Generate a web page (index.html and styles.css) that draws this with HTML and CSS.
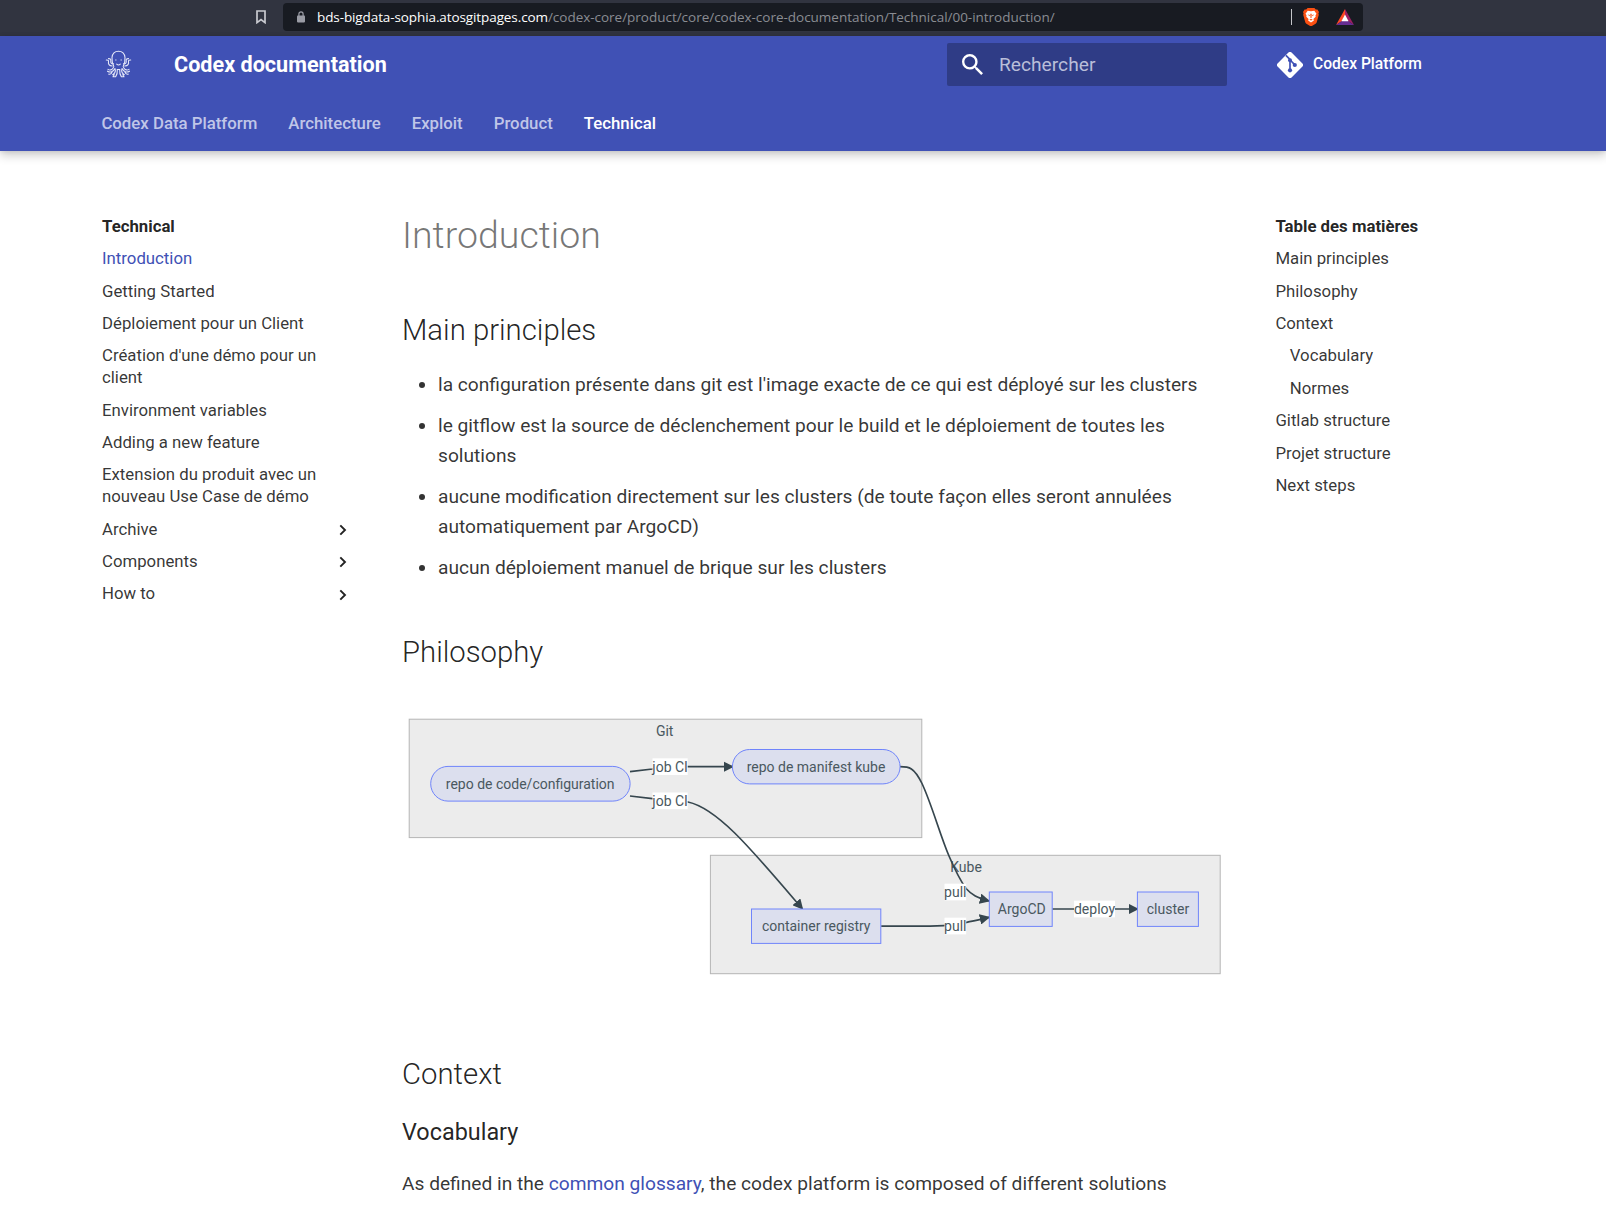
FILE: index.html
```html
<!DOCTYPE html>
<html lang="fr">
<head>
<meta charset="utf-8">
<title>Introduction - Codex documentation</title>
<link rel="stylesheet" href="styles.css">
</head>
<body>
<div class="browser">
  <svg class="bookmark" viewBox="0 0 10 14"><path d="M1 1h8v11.6L5 9.6l-4 3z" fill="none" stroke="#c9cad0" stroke-width="1.7"/></svg>
  <div class="urlbar">
    <svg class="lock" viewBox="0 0 8 12"><path d="M1.9 5V3a2.1 2.1 0 0 1 4.2 0v2" fill="none" stroke="#9a9ca5" stroke-width="1.2"/><rect x="0" y="4.6" width="8" height="6.8" rx=".8" fill="#9a9ca5"/></svg>
    <span class="url"><span class="host">bds-bigdata-sophia.atosgitpages.com</span><span class="path">/codex-core/product/core/codex-core-documentation/Technical/00-introduction/</span></span>
    <span class="divider"></span>
    <svg class="brave" viewBox="0 0 16 18"><path d="M4.6 0h6.8l1.4 1.5 1.6-.1L16 4l-.6 1.6.4 1.2-2 7.2c-.2.8-.6 1.3-1.2 1.8L8.7 18.1H7.3l-3.9-2.3c-.6-.5-1-1-1.2-1.8L.2 6.800.6 5.600 0 4l1.600-2.600 1.600.1z" fill="#fb5012"/><path d="M8 3.300l3.300-.5 2.200 3-1 1.500.2 1.400-2.300 2.300.5 1.400L8 14.600l-2.900-2.200.5-1.400-2.300-2.300.2-1.400-1-1.500 2.200-3z" fill="#fff"/><path d="M4.600 6.400l2.300.6-.3 1.300zM11.400 6.400l-2.300.6.3 1.300zM7.300 5.800h1.400L8.500 10h-1zM6.300 11.700L8 10.800l1.700.9L8 12.600z" fill="#fb5012"/></svg>
    <svg class="bat" viewBox="0 0 18 16"><path d="M9 0L0 16l6-4 3-5.500z" fill="#ff4724"/><path d="M9 0l9 16-6-4-3-5.500z" fill="#9e1f63"/><path d="M0 16h18l-6-4H6z" fill="#662d91"/><path d="M9 5.600L5.400 12.200h7.200z" fill="#fff"/></svg>
  </div>
</div>

<header class="header">
  <div class="header-row">
    <svg class="logo" viewBox="0 0 26 28" fill="none" stroke="#e4e7f8" stroke-width="1.1" stroke-linecap="round" stroke-linejoin="round">
      <path d="M8.300 16.500C7 13.500 6.200 10.500 6.500 7.500 6.900 3.700 9.500 1.200 13 1.200s6.100 2.500 6.500 6.300c.3 3-.5 6-1.800 9"/>
      <path d="M6.700 16C3.500 15.800 2.600 13.800 3 11.800 3.200 10.600 2.800 9.900.8 10M8 13.800c-2.200 0-3-1-2.700-2.600C5.600 9.500 4.800 8.500 3 8.600"/>
      <path d="M19.300 16c3.200-.2 4.100-2.200 3.700-4.200-.2-1.200.2-1.900 2.200-1.800M18 13.800c2.200 0 3-1 2.700-2.600-.3-1.700.5-2.700 2.300-2.600"/>
      <path d="M8 17.500c-1.600 2.500-3.500 3.200-5.500 1.900M9.500 18.500c-1.700 3-4.400 4.500-7.500 2.700M9.800 19.500c.3 2.500-.6 4-2.600 5.200M6.500 22.200c-.5 1.600-1.500 2.300-3.200 1.900M11.800 19.500c.2 3-.2 5.400-1.600 7.200H7.500l1.200-2"/>
      <path d="M18 17.500c1.600 2.500 3.500 3.200 5.500 1.900M16.500 18.500c1.700 3 4.400 4.500 7.500 2.700M16.200 19.500c-.3 2.500.6 4 2.600 5.200M19.500 22.200c.5 1.600 1.500 2.300 3.200 1.900M14.200 19.500c-.2 3 .2 5.400 1.600 7.200h2.700l-1.200-2"/>
      <path d="M11.200 14.200c1 .9 2.600.9 3.600 0M10.400 9.800v.3M15.600 9.800v.3M11.800 19.500h2.400"/>
    </svg>
    <span class="site-title">Codex documentation</span>
    <div class="search">
      <svg viewBox="3 3 17.500 17.500"><path fill="#fff" d="M9.500 3A6.500 6.500 0 0 1 16 9.500c0 1.610-.59 3.090-1.560 4.230l.27.270h.79l5 5-1.500 1.500-5-5v-.79l-.27-.27A6.516 6.516 0 0 1 9.500 16 6.500 6.500 0 0 1 3 9.500 6.500 6.500 0 0 1 9.500 3m0 2C7 5 5 7 5 9.500S7 14 9.500 14 14 12 14 9.500 12 5 9.500 5z"/></svg>
      <span>Rechercher</span>
    </div>
    <div class="source">
      <svg viewBox="0 0 26 26"><path d="M11.200.8a2.500 2.500 0 0 1 3.600 0l10.400 10.400a2.500 2.500 0 0 1 0 3.600L14.800 25.200a2.500 2.500 0 0 1-3.600 0L.8 14.800a2.500 2.500 0 0 1 0-3.600z" fill="#fff"/><path d="M8.900 3.300l4 4M13 8v10.200M13.600 8.500l4 4.200" stroke="#4051b5" stroke-width="1.700" fill="none"/><circle cx="13" cy="8.200" r="2" fill="#4051b5"/><circle cx="13" cy="18.300" r="2.100" fill="#4051b5"/><circle cx="17.800" cy="13" r="2.100" fill="#4051b5"/></svg>
      <span>Codex Platform</span>
    </div>
  </div>
  <nav class="tabs">
    <span>Codex Data Platform</span><span>Architecture</span><span>Exploit</span><span>Product</span><span class="active">Technical</span>
  </nav>
</header>

<main class="main">
  <nav class="nav">
    <div class="nav-title">Technical</div>
    <div class="item current">Introduction</div>
    <div class="item">Getting Started</div>
    <div class="item">Déploiement pour un Client</div>
    <div class="item">Création d'une démo pour un client</div>
    <div class="item">Environment variables</div>
    <div class="item">Adding a new feature</div>
    <div class="item">Extension du produit avec un nouveau Use Case de démo</div>
    <div class="item section">Archive<svg viewBox="0 0 8 12"><path d="M1.300 1.300L6 6l-4.700 4.700"/></svg></div>
    <div class="item section">Components<svg viewBox="0 0 8 12"><path d="M1.300 1.300L6 6l-4.700 4.700"/></svg></div>
    <div class="item section">How to<svg viewBox="0 0 8 12"><path d="M1.300 1.300L6 6l-4.700 4.700"/></svg></div>
  </nav>

  <article class="content">
    <h1>Introduction</h1>
    <h2>Main principles</h2>
    <ul>
      <li>la configuration présente dans git est l'image exacte de ce qui est déployé sur les clusters</li>
      <li>le gitflow est la source de déclenchement pour le build et le déploiement de toutes les solutions</li>
      <li>aucune modification directement sur les clusters (de toute façon elles seront annulées automatiquement par ArgoCD)</li>
      <li>aucun déploiement manuel de brique sur les clusters</li>
    </ul>
    <h2 class="philosophy">Philosophy</h2>
    <svg class="diagram" viewBox="402 700 825 290">
      <defs>
        <marker id="arrow" viewBox="0 0 10 10" refX="9" refY="5" markerUnits="userSpaceOnUse" markerWidth="10.500" markerHeight="10.500" orient="auto"><path d="M0 0L10 5 0 10z" fill="#36464e"/></marker>
      </defs>
      <g class="cluster">
        <rect x="409.200" y="719.200" width="512.600" height="118.400"/>
        <rect x="710.400" y="855.300" width="509.800" height="118.400"/>
      </g>
      <text x="664.700" y="736">Git</text>
      <text x="966" y="872">Kube</text>
      <g class="edge">
        <path d="M630 771.600L652.500 769C664 767.400 674 766.700 688 766.700H733" marker-end="url(#arrow)"/>
        <path d="M630 796L652.500 798.600C664 800 676 800 688 802C718 808.500 752 850 802.500 909" marker-end="url(#arrow)"/>
        <path d="M900 766.700C909 766.700 914 767 922 783.500C932 805 940 835 949 856C955 870 960 880 966 888.500C972 895 977 898 989.200 901" marker-end="url(#arrow)"/>
        <path d="M881.200 926.200H930C950 926.200 962 923.500 989.200 917.300" marker-end="url(#arrow)"/>
        <path d="M1052.300 909H1138" marker-end="url(#arrow)"/>
      </g>
      <g class="node">
        <rect x="430.700" y="766.400" width="199.400" height="34.700" rx="17.300"/>
        <rect x="732.400" y="749.500" width="167.700" height="34.400" rx="17.200"/>
        <rect x="751.500" y="909" width="129.300" height="34.400"/>
        <rect x="989.300" y="892" width="62.900" height="34.400"/>
        <rect x="1137.400" y="892" width="61" height="34.400"/>
      </g>
      <g fill="#fff">
        <rect x="652.500" y="758.300" width="35.200" height="16.700"/>
        <rect x="652.500" y="792.500" width="35.200" height="16.700"/>
        <rect x="944.500" y="883.700" width="21.700" height="16.700"/>
        <rect x="944.500" y="917.700" width="21.700" height="16.700"/>
        <rect x="1074" y="900.700" width="41" height="16.700"/>
      </g>
      <text x="530.200" y="789">repo de code/configuration</text>
      <text x="816" y="772">repo de manifest kube</text>
      <text x="816.200" y="931.200">container registry</text>
      <text x="1021.800" y="914.200">ArgoCD</text>
      <text x="1168" y="914.200">cluster</text>
      <text x="670.100" y="772">job CI</text>
      <text x="670.100" y="806">job CI</text>
      <text x="955.300" y="897.300">pull</text>
      <text x="955.300" y="931.200">pull</text>
      <text x="1094.500" y="914.200">deploy</text>
    </svg>
    <h2 class="context">Context</h2>
    <h3>Vocabulary</h3>
    <p>As defined in the <a>common glossary</a>, the codex platform is composed of different solutions</p>
  </article>

  <nav class="toc">
    <div class="nav-title">Table des matières</div>
    <div class="item">Main principles</div>
    <div class="item">Philosophy</div>
    <div class="item">Context</div>
    <div class="item sub">Vocabulary</div>
    <div class="item sub">Normes</div>
    <div class="item">Gitlab structure</div>
    <div class="item">Projet structure</div>
    <div class="item">Next steps</div>
  </nav>
</main>
</body>
</html>
```

FILE: styles.css
```css
* { box-sizing: border-box; }
body {
  margin: 0;
  width: 1606px;
  height: 1222px;
  overflow: hidden;
  background: #fff;
  color: rgba(0, 0, 0, .8);
  font-family: Roboto, "Liberation Sans", sans-serif;
}
svg { display: block; flex: none; }

.browser {
  height: 36px;
  padding: 3px 0 5px 256px;
  display: flex;
  align-items: flex-start;
  background: #313440;
}
.bookmark { width: 10px; height: 14px; margin: 7px 17px 0 0; }
.urlbar {
  width: 1080px;
  height: 28px;
  padding: 0 9px 0 14px;
  display: flex;
  align-items: center;
  background: #181b22;
  border-radius: 4px;
}
.lock { width: 8px; height: 12px; margin-right: 12px; }
.url {
  flex: 1;
  white-space: nowrap;
  font: 13.5px/28px "Open Sans", "Noto Sans", sans-serif;
}
.host { color: #fff; letter-spacing: -.1px; }
.path { color: #8a8c92; letter-spacing: -.02px; }
.divider { width: 1px; height: 16px; margin-right: 11px; background: #c5c6ca; }
.brave { width: 16px; height: 18px; margin-right: 17px; }
.bat { width: 18px; height: 16px; }

.header {
  position: relative;
  height: 115px;
  background: #4051b5;
  color: #fff;
  box-shadow: 0 0 4.8px rgba(0, 0, 0, .1), 0 4.8px 9.6px rgba(0, 0, 0, .2);
}
.header-row { height: 57px; padding-left: 105px; display: flex; align-items: center; }
.logo { width: 27px; height: 28px; margin: 0 42px 2px 0; }
.site-title { width: 773px; font-size: 21.6px; font-weight: 700; line-height: 57px; }
.search {
  width: 280px;
  height: 43px;
  margin-right: 50px;
  padding-left: 15px;
  display: flex;
  align-items: center;
  background: #2f3c86;
  border-radius: 2px;
}
.search svg { width: 21px; height: 21px; margin-right: 16px; }
.search span { font-size: 19.2px; color: #b9bed9; }
.source { display: flex; align-items: center; gap: 10px; margin-bottom: 2px; font-size: 15.6px; font-weight: 500; }
.source svg { width: 26px; height: 26px; margin-top: 2px; }

.tabs { display: flex; gap: 31px; height: 58px; padding-left: 101.4px; line-height: 60px; font-size: 16.8px; font-weight: 500; color: #c0c6e8; }
.tabs .active { color: #fff; }

.main { display: flex; align-items: flex-start; }
.nav, .toc { padding-top: 65px; font-size: 16.78px; line-height: 21.84px; }
.nav { width: 250px; margin-left: 102px; }
.toc { width: 220px; margin-left: 48.4px; }
.nav-title { font-weight: 700; color: rgba(0, 0, 0, .87); }
.item { margin-top: 10.52px; padding-right: 20px; }
.current, a { color: #4051b5; }
.sub { padding-left: 14.4px; }
.section { display: flex; justify-content: space-between; align-items: center; padding-right: 5px; }
.section svg { width: 8px; height: 12px; margin-top: 1px; fill: none; stroke: #222; stroke-width: 1.9; }

.content { width: 825px; margin-left: 50px; padding-top: 60px; font-size: 19.17px; line-height: 30px; }
h1, h2, h3, ul, p { margin: 0; padding: 0; }
h1 { font-size: 37.5px; line-height: 48px; font-weight: 300; color: rgba(0, 0, 0, .54); }
h2 { margin-top: 51px; font-size: 29.3px; line-height: 40px; font-weight: 300; color: rgba(0, 0, 0, .87); }
ul { margin-top: 20px; padding-left: 36px; list-style: disc; }
li + li { margin-top: 11px; }
.philosophy { margin-top: 49px; }
.diagram { width: 825px; height: 290px; margin-top: 28px; }
.context { margin-top: 63.7px; }
h3 { margin-top: 22.3px; font-size: 23.4px; line-height: 32px; font-weight: 400; color: rgba(0, 0, 0, .87); }
p { margin-top: 20.6px; }

.cluster rect { fill: #ececec; stroke: #b5b5b5; stroke-width: 1; }
.node rect { fill: #dcdfee; stroke: #6f84fb; stroke-width: 1; }
.edge path { fill: none; stroke: #36464e; stroke-width: 1.7; }
.diagram text { font-size: 14px; text-anchor: middle; fill: #4a5860; }
```
